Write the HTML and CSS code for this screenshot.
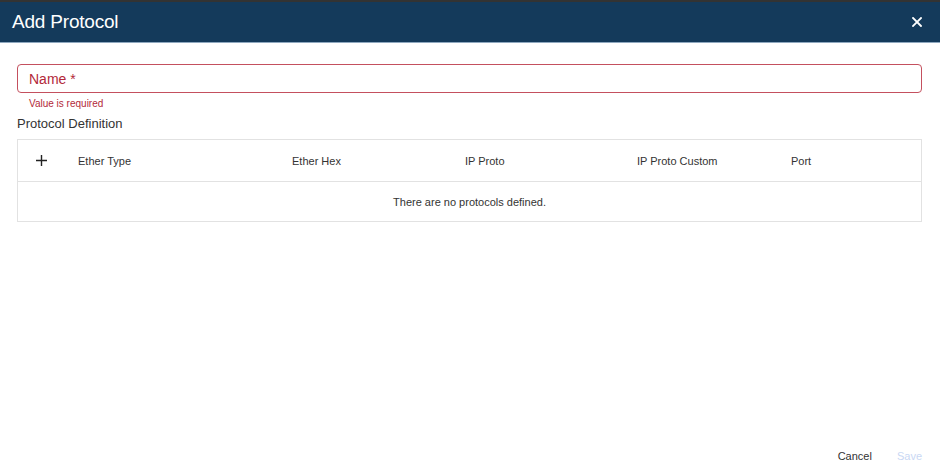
FILE: index.html
```html
<!DOCTYPE html>
<html lang="en">
<head>
    <meta charset="UTF-8">
    <meta name="viewport" content="width=device-width, initial-scale=1.0">
    <title>Add Protocol</title>
    <link rel="stylesheet" href="styles.css">
</head>
<body>
    <div class="topbar"></div>
    <div class="dialog">
        <div class="dialog-header">
            <h2>Add Protocol</h2>
            <button class="close" aria-label="Close">
                <svg width="10" height="10" viewBox="0 0 10 10">
                    <path d="M1 1 L9 9 M9 1 L1 9" stroke="#fff" stroke-width="1.8" stroke-linecap="square"/>
                </svg>
            </button>
        </div>

        <div class="dialog-body">
            <div class="field error">
                <span class="field-label">Name *</span>
            </div>
            <div class="field-hint">Value is required</div>

            <div class="section-title">Protocol Definition</div>

            <div class="table">
                <div class="row head">
                    <div class="cell add">
                        <svg width="11" height="11" viewBox="0 0 11 11">
                            <path d="M5.5 0 V11 M0 5.5 H11" stroke="#222" stroke-width="1.4"/>
                        </svg>
                    </div>
                    <div class="cell">Ether Type</div>
                    <div class="cell">Ether Hex</div>
                    <div class="cell">IP Proto</div>
                    <div class="cell">IP Proto Custom</div>
                    <div class="cell">Port</div>
                </div>
                <div class="empty">There are no protocols defined.</div>
            </div>
        </div>

        <div class="dialog-footer">
            <button class="btn">Cancel</button>
            <button class="btn disabled" disabled>Save</button>
        </div>
    </div>
</body>
</html>
```

FILE: styles.css
```css
html, body {
    height: 100%;
}

body {
    margin: 0;
    font-family: "Liberation Sans", Arial, sans-serif;
    background-color: #fff;
    color: #333;
    display: flex;
    flex-direction: column;
}

.topbar {
    height: 2px;
    background-color: #333;
}

.dialog {
    flex: 1;
    display: flex;
    flex-direction: column;
}

.dialog-header {
    height: 40px;
    background-color: #143a5b;
    border-bottom: 1px solid #8fa8bf;
    display: flex;
    align-items: center;
    justify-content: space-between;
    padding: 0 18px 0 12px;
}

.dialog-header h2 {
    margin: 0;
    color: #fff;
    font-size: 19px;
    font-weight: normal;
    letter-spacing: -0.2px;
}

.close {
    background: none;
    border: none;
    padding: 0;
    width: 10px;
    height: 10px;
    display: flex;
    cursor: pointer;
}

.dialog-body {
    flex: 1;
    padding: 21px 18px 0 17px;
}

.field {
    height: 27px;
    border: 1px solid #c4505e;
    border-radius: 4px;
    display: flex;
    align-items: center;
    padding: 0 11px;
}

.field-label {
    color: #b3293a;
    font-size: 14px;
}

.field-hint {
    color: #b3293a;
    font-size: 10px;
    padding: 5px 0 0 12px;
    height: 12px;
}

.section-title {
    font-size: 13px;
    color: #333;
    margin-top: 6px;
    height: 15px;
}

.table {
    margin-top: 8px;
    border: 1px solid #e2e2e2;
    font-size: 11px;
    color: #333;
}

.row {
    display: grid;
    grid-template-columns: 45px 214px 173px 172px 154px 1fr;
    height: 41px;
    align-items: center;
    border-bottom: 1px solid #e2e2e2;
}

.cell {
    padding-left: 15px;
}

.cell.add {
    display: flex;
    justify-content: center;
    padding-left: 1px;
}

.empty {
    height: 39px;
    display: flex;
    align-items: center;
    justify-content: center;
}

.dialog-footer {
    display: flex;
    justify-content: flex-end;
    gap: 25px;
    padding: 0 18px 13px 0;
}

.btn {
    background: none;
    border: none;
    padding: 0;
    font-family: inherit;
    font-size: 11px;
    color: #333;
    cursor: pointer;
}

.btn.disabled {
    color: #c9d8f4;
    cursor: default;
}
```
